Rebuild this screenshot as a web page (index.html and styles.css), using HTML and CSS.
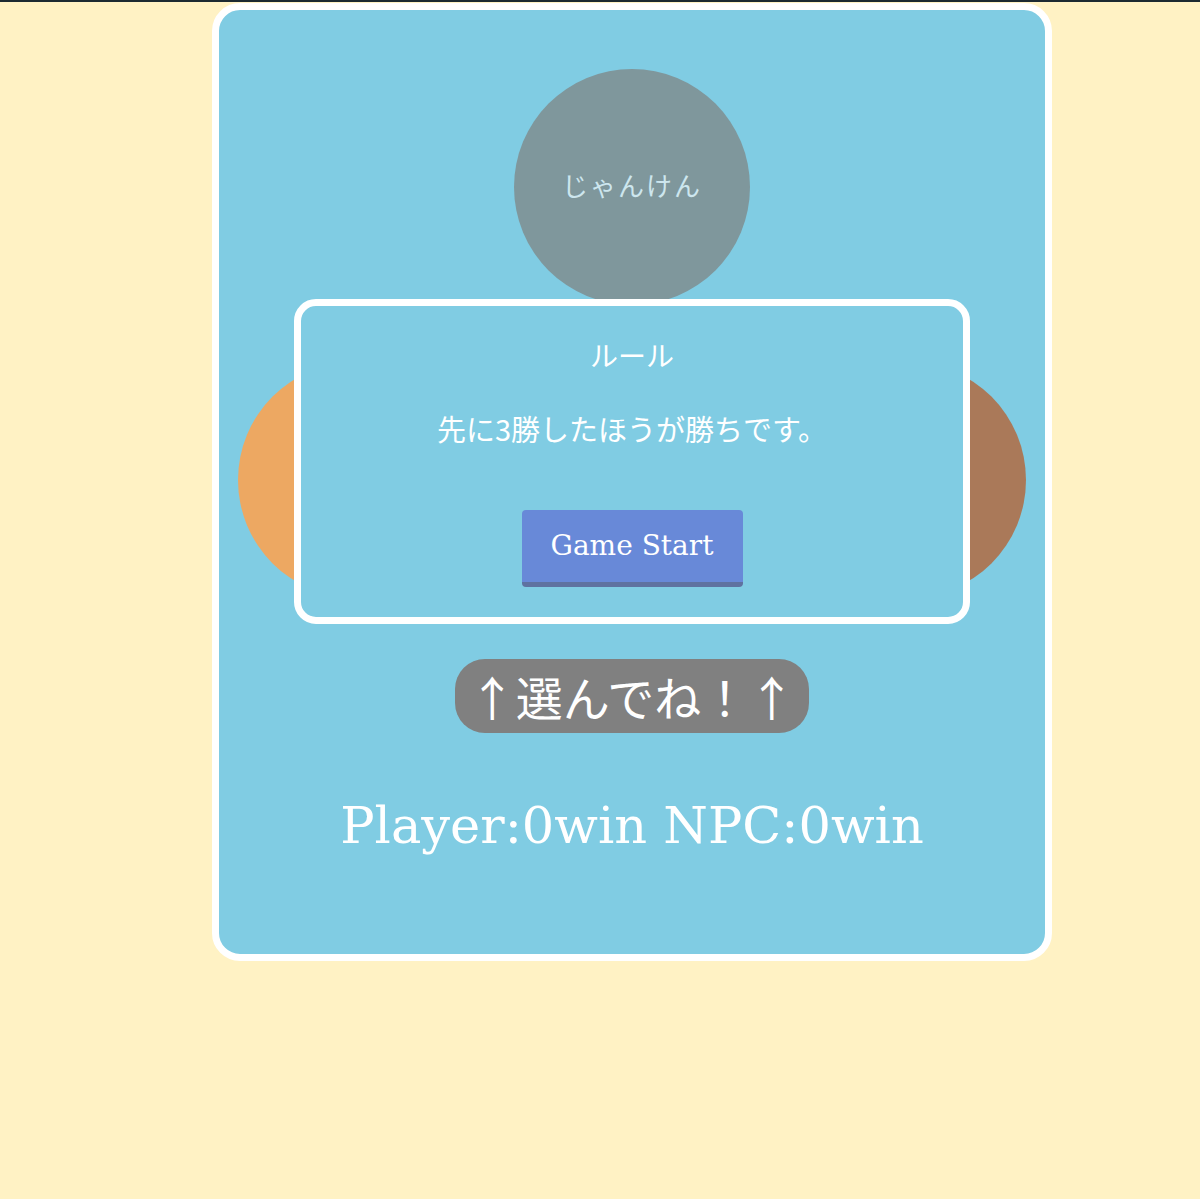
FILE: index.html
```html
<!DOCTYPE html>
<html lang="ja">
<head>
<meta charset="utf-8">
<title>じゃんけん</title>
<link rel="stylesheet" href="styles.css">
</head>
<body>
<div class="topbar"></div>
<main class="card">
  <div class="npc-hand">じゃんけん</div>
  <div class="hands">
    <div class="hand hand-rock"></div>
    <div class="hand hand-scissors"></div>
    <div class="hand hand-paper"></div>
  </div>
  <div class="prompt">↑選んでね！↑</div>
  <div class="score">Player:0win NPC:0win</div>

  <section class="rule">
    <h2 class="rule-title">ルール</h2>
    <p class="rule-text">先に3勝したほうが勝ちです。</p>
    <button class="start-btn">Game Start</button>
  </section>
</main>
</body>
</html>
```

FILE: styles.css
```css
html, body {
  margin: 0;
  padding: 0;
}

body {
  background: #fff2c4;
  width: 1200px;
  height: 1199px;
  font-family: "Noto Sans CJK JP", "Noto Sans", sans-serif;
}

.topbar {
  height: 2px;
  background: #1c2a31;
}

.card {
  position: relative;
  box-sizing: border-box;
  width: 840px;
  height: 958px;
  margin: 1px 0 0 212px;
  border: 7px solid #ffffff;
  border-radius: 28px;
  background: #80cce3;
  display: flex;
  flex-direction: column;
  align-items: center;
}

.npc-hand {
  margin-top: 59px;
  box-sizing: border-box;
  width: 236px;
  height: 236px;
  padding-bottom: 5px;
  border-radius: 50%;
  background: #7f979c;
  color: #cde6ee;
  font-size: 26px;
  letter-spacing: 2px;
  display: flex;
  align-items: center;
  justify-content: center;
}

.hands {
  margin-top: 57px;
  display: flex;
  gap: 40px;
}

.hand {
  width: 236px;
  height: 236px;
  border-radius: 50%;
}

.hand-rock { background: #eda862; }
.hand-scissors { background: #d9c36a; }
.hand-paper { background: #aa7959; }

.prompt {
  margin-top: 61px;
  box-sizing: border-box;
  width: 354px;
  height: 74px;
  border-radius: 30px;
  background: #808080;
  color: #ffffff;
  font-size: 47px;
  line-height: 74px;
  text-align: center;
  white-space: nowrap;
}

.score {
  margin-top: 63px;
  font-family: "DejaVu Serif", "Liberation Serif", serif;
  font-size: 51px;
  line-height: 60px;
  color: #ffffff;
  white-space: nowrap;
}

.rule {
  position: absolute;
  top: 289px;
  left: 75px;
  box-sizing: border-box;
  width: 676px;
  height: 325px;
  border: 7px solid #ffffff;
  border-radius: 22px;
  background: #80cce3;
  display: flex;
  flex-direction: column;
  align-items: center;
  padding-top: 29px;
}

.rule-title {
  margin: 0;
  font-size: 28px;
  font-weight: normal;
  line-height: 40px;
  color: #ffffff;
}

.rule-text {
  margin: 33px 0 0;
  font-size: 29px;
  line-height: 40px;
  color: #ffffff;
}

.start-btn {
  margin-top: 62px;
  box-sizing: border-box;
  width: 221px;
  height: 77px;
  padding: 0;
  border: none;
  border-bottom: 5px solid #5f72a0;
  border-radius: 4px;
  background: #6889d8;
  color: #ffffff;
  font-family: "DejaVu Serif", "Liberation Serif", serif;
  font-size: 28px;
  line-height: 72px;
  cursor: pointer;
}
```
